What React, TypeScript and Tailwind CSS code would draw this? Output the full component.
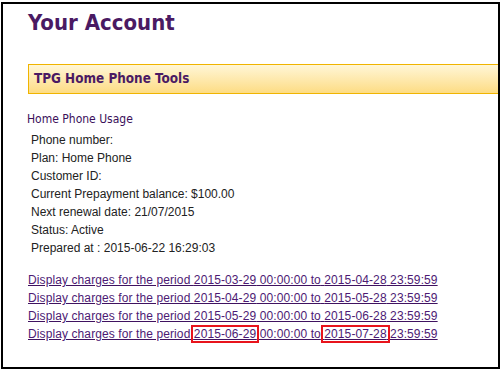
const details = [
  "Phone number:",
  "Plan: Home Phone",
  "Customer ID:",
  "Current Prepayment balance: $100.00",
  "Next renewal date: 21/07/2015",
  "Status: Active",
  "Prepared at : 2015-06-22 16:29:03",
];

const periods = [
  ["2015-03-29", "2015-04-28"],
  ["2015-04-29", "2015-05-28"],
  ["2015-05-29", "2015-06-28"],
  ["2015-06-29", "2015-07-28"],
];

const tahoma = "font-['DejaVu_Sans_Condensed','Open_Sans',sans-serif]";

function Stamp({ text, marked }: { text: string; marked: boolean }) {
  return (
    <span className="relative">
      {text}
      {marked && (
        <span className="absolute -left-[3px] -right-[3px] -top-[2px] -bottom-[2px] border-2 border-[#e8141c]" />
      )}
    </span>
  );
}

export default function App() {
  return (
    <div className="w-[501px] h-[372px] bg-white pl-px pt-[2px]">
      <div className="w-[499px] h-[367px] border-2 border-black bg-white flex flex-col pl-[25px] font-['Liberation_Sans',Arial,sans-serif] text-[12px] text-[#222]">
        <h1 className={`${tahoma} mt-[4px] text-[22px] font-bold text-[#4a1a63] leading-[30px]`}>
          Your Account
        </h1>

        <div className="mt-[26px] h-[30px] border border-r-0 border-[#f0b400] bg-gradient-to-b from-[#fff6d6] to-[#fddc83] flex items-center pl-[5px]">
          <span className={`${tahoma} text-[13.4px] font-bold text-[#4a1a63]`}>TPG Home Phone Tools</span>
        </div>

        <div className={`${tahoma} mt-[16px] -ml-px text-[12px] text-[#3a0f5a] leading-[18px]`}>Home Phone Usage</div>

        <ul className="mt-[3px] pl-[3px] leading-[18px]">
          {details.map((d) => (
            <li key={d}>{d}</li>
          ))}
        </ul>

        <div className="mt-[14px] text-[12px] tracking-[0.1px] leading-[18px]">
          {periods.map(([from, to], i) => {
            const last = i === periods.length - 1;
            return (
              <div key={from}>
                <a href="#" className="text-[#4d1a74] underline decoration-[#3f1260]">
                  Display charges for the period <Stamp text={from} marked={last} /> 00:00:00 to{" "}
                  <Stamp text={to} marked={last} /> 23:59:59
                </a>
              </div>
            );
          })}
        </div>
      </div>
    </div>
  );
}
